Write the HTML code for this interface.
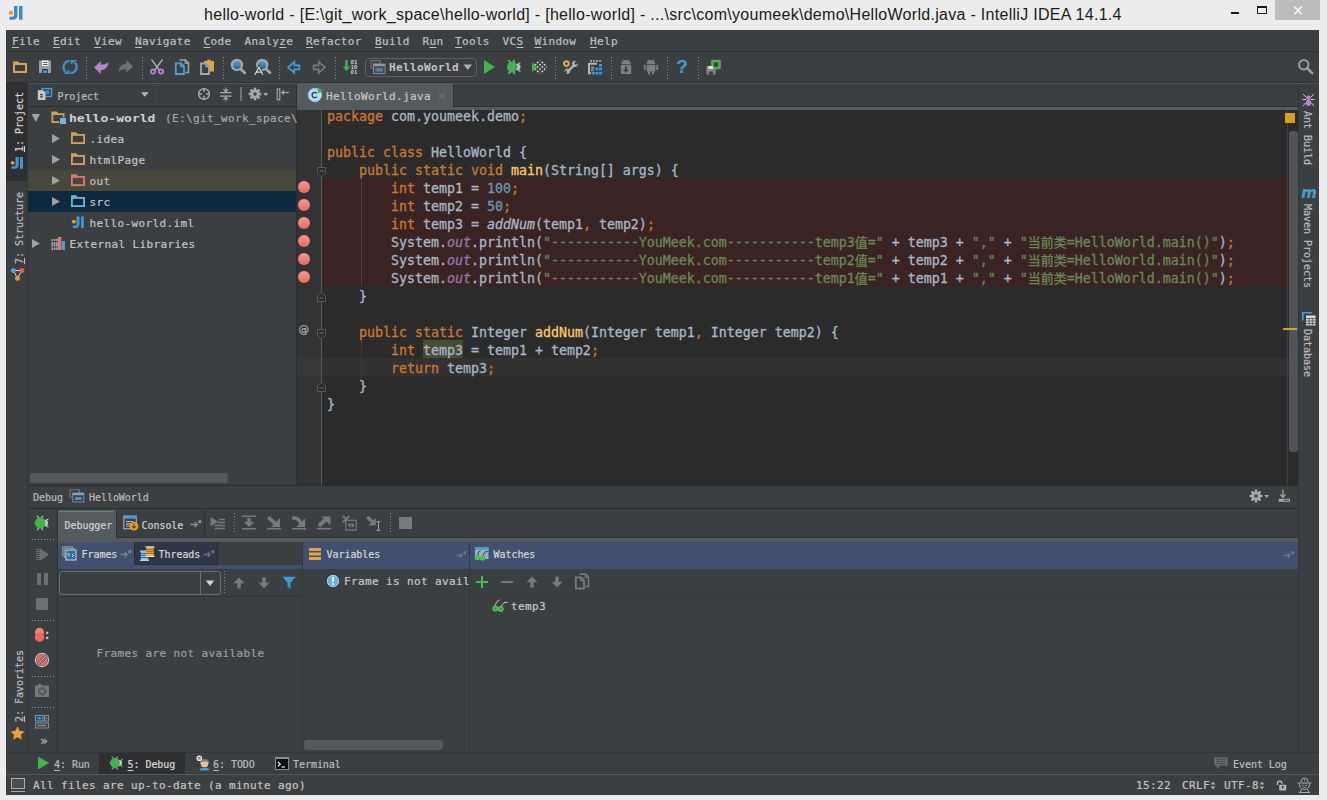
<!DOCTYPE html>
<html lang="en">
<head>
<meta charset="utf-8">
<title>hello-world - IntelliJ IDEA 14.1.4</title>
<style>
*{box-sizing:border-box;margin:0;padding:0}
html,body{width:1327px;height:800px;overflow:hidden}
body{position:relative;background:#ececec;font-family:"DejaVu Sans Mono","Liberation Mono",monospace;font-size:11px;letter-spacing:0.38px;color:#bbbbbb;-webkit-font-smoothing:antialiased;-webkit-text-stroke:0.200px}
.abs{position:absolute}
#title{position:absolute;left:0;top:0;width:1327px;height:30px;background:#ececec}
#title .txt{position:absolute;left:204px;top:4.500px;line-height:20px;font-family:"Liberation Sans",sans-serif;font-size:16px;letter-spacing:0.290px;color:#1a1a1a;white-space:pre;-webkit-text-stroke:0}
#ide{position:absolute;left:6px;top:30px;width:1313px;height:765px;background:#3c3f41;overflow:hidden}
/* everything inside #ide is positioned in page coords via this wrapper */
#pg{position:absolute;left:-6px;top:-30px;width:1327px;height:800px}
#menu{position:absolute;left:6px;top:30px;width:1313px;height:22px;background:#3c3f41;border-bottom:1px solid #2f3133}
.mn{position:absolute;top:35px;line-height:14px;white-space:pre;color:#c0c0c0;letter-spacing:0.34px}
.mn u{text-decoration:underline;text-underline-offset:1.5px;text-decoration-thickness:1px}
#toolbar{position:absolute;left:6px;top:53px;width:1313px;height:30px;background:#3c3f41;border-bottom:1px solid #323232}
.ic{position:absolute;display:block;overflow:visible}
.vt{position:absolute;width:22px;font-size:10px;letter-spacing:-0.02px;color:#bbbbbb}
.vt span{position:absolute;left:13.500px;top:50%;white-space:pre;line-height:12px;transform:translate(-50%,-50%) rotate(-90deg);display:block}
.vt u{text-decoration:underline;text-underline-offset:0.5px}
.tr{position:absolute;line-height:21px;height:21px;padding-top:1px;white-space:pre;color:#c4c4c4;overflow:hidden;max-width:226px}
.tr b{display:inline-block;font-weight:bold;letter-spacing:0;color:#d0d0d0;-webkit-text-stroke:0;transform:scaleX(1.187);transform-origin:0 50%}
.bp{position:absolute;left:298px;width:12px;height:12px;border-radius:6px;background:linear-gradient(#f79a8e,#e8685c)}
#code{position:absolute;left:0;top:0}
.ln{position:absolute;left:327px;height:18px;line-height:18px;padding-top:2px;white-space:pre;font-family:"DejaVu Sans Mono","Liberation Mono","Noto Sans CJK SC",monospace;font-size:13.290px;letter-spacing:0;color:#a9b7c6;-webkit-text-stroke:0.300px}
.ln .k{color:#cc7832}.ln .n{color:#6897bb}.ln .s{color:#6a8759}.ln .m{color:#ffc66d}
.ln i{font-style:italic}.ln i.f{color:#9876aa}
.ln .c{display:inline-block;width:13px;font-family:"Noto Sans CJK SC","WenQuanYi Zen Hei",sans-serif;font-size:13px;line-height:16px;vertical-align:top;text-align:center}
.vr{position:absolute;width:21px;font-size:10px;letter-spacing:-0.02px;color:#bbbbbb}
.vr span{position:absolute;left:9px;top:50%;white-space:pre;line-height:12px;transform:translate(-50%,-50%) rotate(90deg);display:block}
.t10{position:absolute;font-size:10px;line-height:14px;letter-spacing:-0.050px;white-space:pre;color:#bbbbbb}
.t10 u{text-decoration:underline;text-underline-offset:1.500px}
.hdot{position:absolute;height:1px;background:repeating-linear-gradient(90deg,#9a9c9e 0,#9a9c9e 1px,transparent 1px,transparent 3px)}
.vsep{position:absolute;width:1px;background:repeating-linear-gradient(180deg,#85888a 0,#85888a 1px,transparent 1px,transparent 3px)}
</style>
</head>
<body>
<div id="title">
  <svg class="ic" style="left:8px;top:5px" width="16" height="16" viewBox="0 0 16 16"><path d="M6 1h3.500v9c0 3.300-2 4.700-5 4.700H1.500v-3h2.800c1.200 0 1.700-.6 1.700-1.900z" fill="#3f87c9"/><rect x="11" y="1" width="3.500" height="13.700" fill="#3f87c9"/><circle cx="3" cy="7.800" r="2.200" fill="#f39c1f"/></svg>
  <div class="abs" style="left:1231px;top:12px;width:8px;height:2px;background:#1a1a1a"></div>
  <div class="abs" style="left:1257px;top:6px;width:10px;height:8px;border:1px solid #1a1a1a;border-top-width:2px"></div>
  <div class="abs" style="left:1275px;top:0;width:45px;height:20px;background:#bcbcbc"></div>
  <svg class="ic" style="left:1293px;top:6px" width="10" height="10" viewBox="0 0 10 10"><path d="M1.300 0.800l7.400 7.400M8.700 0.800L1.300 8.200" stroke="#ffffff" stroke-width="1.400"/></svg>
  <div class="txt">hello-world - [E:\git_work_space\hello-world] - [hello-world] - ...\src\com\youmeek\demo\HelloWorld.java - IntelliJ IDEA 14.1.4</div>
</div>
<div id="ide"><div id="pg">
<div id="menu"></div>
<div class="mn" style="left:12px"><u>F</u>ile</div>
<div class="mn" style="left:53px"><u>E</u>dit</div>
<div class="mn" style="left:94px"><u>V</u>iew</div>
<div class="mn" style="left:135px"><u>N</u>avigate</div>
<div class="mn" style="left:203.5px"><u>C</u>ode</div>
<div class="mn" style="left:244.5px">Analy<u>z</u>e</div>
<div class="mn" style="left:306px"><u>R</u>efactor</div>
<div class="mn" style="left:375px"><u>B</u>uild</div>
<div class="mn" style="left:422.5px">R<u>u</u>n</div>
<div class="mn" style="left:455px"><u>T</u>ools</div>
<div class="mn" style="left:502.5px">VC<u>S</u></div>
<div class="mn" style="left:534.5px"><u>W</u>indow</div>
<div class="mn" style="left:590px"><u>H</u>elp</div>

<div id="toolbar"></div>
<div class="vsep" style="left:86px;top:57px;height:23px"></div>
<div class="vsep" style="left:142px;top:57px;height:23px"></div>
<div class="vsep" style="left:223px;top:57px;height:23px"></div>
<div class="vsep" style="left:279px;top:57px;height:23px"></div>
<div class="vsep" style="left:335px;top:57px;height:23px"></div>
<div class="vsep" style="left:555px;top:57px;height:23px"></div>
<div class="vsep" style="left:611px;top:57px;height:23px"></div>
<div class="vsep" style="left:667px;top:57px;height:23px"></div>
<div class="vsep" style="left:698px;top:57px;height:23px"></div>
<!-- open folder -->
<svg class="ic" style="left:12px;top:59px" width="16" height="16" viewBox="0 0 16 16"><path d="M1 2.5h5.2l1.3 1.6H15V14H1z" fill="#d9a54e"/><rect x="3" y="6" width="10" height="6" fill="#3c3f41"/></svg>
<!-- save -->
<svg class="ic" style="left:37px;top:59px" width="16" height="16" viewBox="0 0 16 16"><path d="M2 1.5h12V14H2z" fill="#9a9da0"/><rect x="5" y="1.5" width="6.5" height="5.5" fill="#f2f2f2"/><rect x="6" y="3" width="4.5" height="1" fill="#55585a"/><rect x="6" y="5" width="4.5" height="1" fill="#55585a"/><rect x="5" y="10" width="6" height="4" fill="#3c3f41"/><rect x="6" y="11.5" width="4" height="2.5" fill="#3f97d3"/></svg>
<!-- sync -->
<svg class="ic" style="left:62px;top:59px" width="16" height="16" viewBox="0 0 16 16"><g fill="none" stroke="#3a93c9" stroke-width="2.300"><path d="M7.600 2.200A5.700 5.900 0 0 0 3.600 12.600"/><path d="M8.600 13.900A5.700 5.900 0 0 0 12.600 3.500"/></g><path d="M1 15.100h6.600v-4.600z" fill="#3a93c9"/><path d="M15.200 0.900H8.600v4.600z" fill="#3a93c9"/></svg>
<!-- undo -->
<svg class="ic" style="left:93px;top:59px" width="16" height="16" viewBox="0 0 16 16"><path d="M1 8.400L7.900 2v3.500c3.100 0 6.100-.5 7.300-2.600.4 4.600-2.700 8.100-7.300 8.300v3.700z" fill="#b583cf"/></svg>
<!-- redo -->
<svg class="ic" style="left:118px;top:59px" width="16" height="16" viewBox="0 0 16 16"><path d="M1 8.400L7.900 2v3.500c3.100 0 6.100-.5 7.300-2.600.4 4.600-2.700 8.100-7.300 8.300v3.700z" transform="rotate(180 8.050 7.930)" fill="#6f7274"/></svg>
<!-- cut -->
<svg class="ic" style="left:149px;top:59px" width="16" height="16" viewBox="0 0 16 16"><g stroke="#aab0b3" stroke-width="1.3" fill="none"><path d="M2.500 0.500L10.200 11"/><path d="M13.500 0.500L5.800 11"/></g><g stroke="#b583cf" stroke-width="1.800" fill="none"><circle cx="4" cy="12.600" r="2.100"/><circle cx="12" cy="12.600" r="2.100"/></g></svg>
<!-- copy -->
<svg class="ic" style="left:174px;top:59px" width="16" height="16" viewBox="0 0 16 16"><path d="M5.500 1h6l3 3v9.500h-3" fill="none" stroke="#9ea1a3" stroke-width="1.600"/><path d="M11.200 1v3.300h3.300" fill="none" stroke="#9ea1a3" stroke-width="1.200"/><path d="M1.800 4.300h5.400l2.800 2.800V15H1.800z" fill="#3c3f41" stroke="#4b9fd6" stroke-width="1.800"/><path d="M6.800 4.300v3.200h3.200" fill="none" stroke="#4b9fd6" stroke-width="1.300"/></svg>
<!-- paste -->
<svg class="ic" style="left:199px;top:59px" width="16" height="16" viewBox="0 0 16 16"><path d="M5 2h3l.5-1.200h3L12 2h3v10.500H5z" fill="#e0a346"/><path d="M2 4.500h5.300L10 7.200V15H2z" fill="#3c3f41" stroke="#a4a7a9" stroke-width="1.800"/><path d="M6.800 4.500v3.200H10" fill="none" stroke="#a4a7a9" stroke-width="1.300"/></svg>
<!-- find -->
<svg class="ic" style="left:230px;top:59px" width="16" height="16" viewBox="0 0 16 16"><defs><linearGradient id="lens" x1="0" y1="0" x2="0" y2="1"><stop offset="0" stop-color="#56a8dc"/><stop offset="0.550" stop-color="#3a84b8"/><stop offset="1" stop-color="#2d4d66"/></linearGradient></defs><path d="M10.500 9.800L14.800 13.900" stroke="#a7aaac" stroke-width="2.700" stroke-linecap="round"/><circle cx="6.900" cy="5.900" r="5.100" fill="url(#lens)" stroke="#a7aaac" stroke-width="2.200"/></svg>
<!-- replace -->
<svg class="ic" style="left:254px;top:59px" width="17" height="16" viewBox="0 0 17 16"><path d="M11.800 9.800L16 13.700" stroke="#a7aaac" stroke-width="2.700" stroke-linecap="round"/><circle cx="8.200" cy="5.900" r="5.100" fill="url(#lens)" stroke="#a7aaac" stroke-width="2.200"/><path d="M0.900 15.700L4.900 8.200 8.900 15.700M2.300 13.200h5.200" fill="none" stroke="#3c3f41" stroke-width="3"/><path d="M0.900 15.700L4.900 8.200 8.900 15.700M2.300 13.200h5.200" fill="none" stroke="#d4d6d7" stroke-width="1.300"/></svg>
<!-- back -->
<svg class="ic" style="left:286px;top:59px" width="16" height="16" viewBox="0 0 16 16"><path d="M2 8.300L8.300 2.900v3.500h5v3.900h-5v3.500z" fill="#3c3f41" stroke="#3f9fe0" stroke-width="1.700" stroke-linejoin="miter"/></svg>
<!-- forward -->
<svg class="ic" style="left:311px;top:59px" width="16" height="16" viewBox="0 0 16 16"><path d="M14 8.300L7.700 2.900v3.500h-5v3.900h5v3.500z" fill="#3c3f41" stroke="#77797b" stroke-width="1.700"/></svg>
<!-- make -->
<svg class="ic" style="left:341px;top:59px" width="17" height="16" viewBox="0 0 17 16"><path d="M4.300 1h2.400v6.500h2.500L5.500 12.200 1.800 7.500h2.500z" fill="#3fb54a"/><g font-family="DejaVu Sans Mono,monospace" font-size="5.600" fill="#f0f0f0" letter-spacing="0" style="-webkit-text-stroke:0"><text x="9.600" y="5.400">01</text><text x="9.600" y="10.400">10</text><text x="9.600" y="15.400">01</text></g></svg>
<!-- run config combo -->
<div class="abs" style="left:365px;top:58px;width:112px;height:19px;border:1px solid #5e6163;border-radius:4px;background:#3c3f41"></div>
<svg class="ic" style="left:370px;top:59px" width="16" height="16" viewBox="0 0 16 16"><rect x="1" y="1.500" width="9.500" height="8" fill="#46494b" stroke="#6d7072" stroke-width="1"/><rect x="3.500" y="5" width="11.500" height="9.500" fill="#3c4a57" stroke="#7d8a96" stroke-width="1"/><rect x="3.500" y="5" width="11.500" height="2.200" fill="#8d99a4"/><rect x="5.500" y="9" width="7.500" height="3.500" fill="#5a7f9c"/></svg>
<div class="abs" style="left:389px;top:61px;line-height:14px;font-weight:bold;color:#c4c4c4;letter-spacing:0.380px;-webkit-text-stroke:0">HelloWorld</div>
<svg class="ic" style="left:463px;top:64px" width="10" height="7" viewBox="0 0 10 7"><path d="M0.500 0.500h8.500L4.750 6z" fill="#aeb0b2"/></svg>
<!-- run -->
<svg class="ic" style="left:481px;top:59px" width="16" height="16" viewBox="0 0 16 16"><path d="M3 1l11 7-11 7z" fill="#3fb54a"/></svg>
<!-- debug -->
<svg class="ic" style="left:506px;top:59px" width="16" height="16" viewBox="0 0 16 16"><g stroke="#c0c3c5" stroke-width="1.100" fill="none"><path d="M2.500 1l2.300 3M8.500 1L7 4M2.500 15l2.300-3M8.500 15L7 12"/><path d="M14.500 3.800c-1.700.2-2.500 1.500-2.500 1.500M14.500 12.200c-1.700-.2-2.500-1.500-2.500-1.500"/></g><ellipse cx="11.300" cy="8" rx="3.200" ry="3.300" fill="#b9bcbe"/><ellipse cx="6" cy="8" rx="5" ry="5.600" fill="#3fb54a"/><path d="M9.500 5.500c2 .8 2 4.200 0 5z" fill="#3c3f41" opacity=".55"/></svg>
<!-- coverage -->
<svg class="ic" style="left:531px;top:59px" width="16" height="16" viewBox="0 0 16 16"><defs><pattern id="chk" width="3.200" height="3.200" patternUnits="userSpaceOnUse" patternTransform="rotate(45)"><rect width="3.200" height="3.200" fill="#3c3f41"/><rect width="1.700" height="1.700" fill="#d4d6d7"/></pattern></defs><circle cx="9.300" cy="8" r="6.500" fill="#2f3133"/><circle cx="9.300" cy="8" r="6.500" fill="url(#chk)"/><path d="M1 3.300l5.800 4.700L1 12.700z" fill="#3fb54a"/></svg>
<!-- settings -->
<svg class="ic" style="left:563px;top:59px" width="16" height="16" viewBox="0 0 16 16"><path d="M4 13.500L12 5.200" stroke="#aeb1b3" stroke-width="2.500"/><path d="M8.800 4.200a3.300 3.300 0 0 1 4.300-2.200l-1.900 2 .4 1.500 1.500.4 1.900-2a3.300 3.300 0 0 1-4.500 3.800z" fill="#aeb1b3"/><path d="M7.200 12a3 3 0 0 1-4 2.800l1.700-1.800-.4-1.400-1.400-.4-1.700 1.800a3 3 0 0 1 4-3.300z" fill="#aeb1b3"/><circle cx="3.400" cy="4.600" r="2.400" fill="none" stroke="#e0a346" stroke-width="2.100"/></svg>
<!-- project structure -->
<svg class="ic" style="left:587px;top:59px" width="16" height="16" viewBox="0 0 16 16"><path d="M3 2h11" stroke="#8f9ba6" stroke-width="2" stroke-dasharray="2 1"/><path d="M2 4.800h8M2 4v10.200h2" fill="none" stroke="#b4b7b9" stroke-width="2"/><path d="M4 8.200h3.200M4 9.900h3.200M4 11.600h2.500" stroke="#b4b7b9" stroke-width="0.900"/><g fill="#2f9fe3"><rect x="12.100" y="5" width="2.900" height="2.600"/><rect x="8.500" y="8.700" width="2.900" height="2.600"/><rect x="12.100" y="8.700" width="2.900" height="2.600"/><rect x="4.900" y="12.900" width="2.900" height="2.600"/><rect x="8.500" y="12.900" width="2.900" height="2.600"/><rect x="12.100" y="12.900" width="2.900" height="2.600"/></g></svg>
<!-- sdk manager -->
<svg class="ic" style="left:618px;top:59px" width="16" height="16" viewBox="0 0 16 16"><g fill="#7d7f81"><path d="M3.200 5.200a4.800 4.200 0 0 1 9.600 0z"/><rect x="2.800" y="6" width="10.400" height="9" rx="0.500"/></g><path d="M4.500 0.500l1.200 1.800M11.500 0.500l-1.200 1.800" stroke="#7d7f81" stroke-width="0.900"/><path d="M7 7.500h2v3h2L8 13.800 5 10.500h2z" fill="#3c3f41"/></svg>
<!-- avd -->
<svg class="ic" style="left:643px;top:59px" width="16" height="16" viewBox="0 0 16 16"><g fill="#7d7f81"><path d="M3.700 5a4.300 4 0 0 1 8.600 0z"/><rect x="3.700" y="5.800" width="8.600" height="6.700" rx="0.600"/><rect x="0.800" y="5.800" width="2" height="5.200" rx="1"/><rect x="13.200" y="5.800" width="2" height="5.200" rx="1"/><rect x="5" y="12" width="2" height="3.500" rx="1"/><rect x="9" y="12" width="2" height="3.500" rx="1"/></g><path d="M4.800 0.500l1.200 1.800M11.200 0.500l-1.200 1.800" stroke="#7d7f81" stroke-width="0.900"/></svg>
<!-- help -->
<div class="abs" style="left:675px;top:56px;width:14px;text-align:center;font-family:'Liberation Sans',sans-serif;font-weight:bold;font-size:19px;line-height:22px;color:#4598cf;letter-spacing:0">?</div>
<!-- jrebel-like -->
<svg class="ic" style="left:705px;top:59px" width="17" height="17" viewBox="0 0 17 17"><path d="M1.500 7h9v8.500h-9z" fill="#84878a"/><rect x="3.500" y="7" width="4.800" height="3" fill="#e3e3e3"/><rect x="4" y="12.500" width="4" height="3" fill="#3c3f41"/><rect x="6.200" y="1" width="9.500" height="9" rx="1" fill="#4cae4f" stroke="#4cae4f" stroke-width="1" stroke-dasharray="1 1"/><rect x="8.800" y="3.500" width="4.200" height="4.200" fill="#3c3f41"/><rect x="3.500" y="7.200" width="4.600" height="2.800" fill="#e3e3e3"/></svg>
<!-- search everywhere -->
<svg class="ic" style="left:1297px;top:58px" width="17" height="17" viewBox="0 0 17 17"><path d="M10 10l5.200 5.200" stroke="#9c9ea0" stroke-width="2.600" stroke-linecap="round"/><circle cx="6.800" cy="6.800" r="4.700" fill="none" stroke="#9c9ea0" stroke-width="2"/></svg>

<!-- left tool stripe -->
<div class="abs" style="left:6px;top:83px;width:22px;height:669px;background:#3c3f41;border-right:1px solid #323537"></div>
<div class="abs" style="left:6px;top:83px;width:21px;height:98px;background:#2d2f30"></div>
<div class="vt" style="left:6px;top:92px;height:60px;color:#d4d4d4"><span><u>1</u>: Project</span></div>
<svg class="ic" style="left:10px;top:156px" width="14" height="14" viewBox="0 0 14 14"><path d="M5.500 1h3.200v7.800c0 2.800-1.700 4-4.300 4H1.500v-2.600h2.600c1 0 1.400-.5 1.400-1.600z" fill="#3f97d3"/><rect x="10" y="1" width="3" height="11.800" fill="#3f97d3"/><circle cx="2.600" cy="6.800" r="1.900" fill="#f39c1f"/></svg>
<div class="vt" style="left:6px;top:192px;height:72px"><span><u>7</u>: Structure</span></div>
<svg class="ic" style="left:10px;top:267px" width="15" height="15" viewBox="0 0 15 15"><path d="M3.300 3.500h8.400L7.500 11.300z" fill="none" stroke="#d8d8d8" stroke-width="1"/><circle cx="3.300" cy="3.500" r="2.500" fill="#4a9fd8"/><circle cx="11.700" cy="3.500" r="2.500" fill="#e8604f"/><circle cx="7.500" cy="11.300" r="2.500" fill="#d99a3f"/></svg>
<div class="vt" style="left:6px;top:650px;height:72px"><span><u>2</u>: Favorites</span></div>
<svg class="ic" style="left:10px;top:726px" width="15" height="14" viewBox="0 0 15 14"><path d="M7.500 0.300l2.100 4.500 4.900.6-3.600 3.400.9 4.900-4.300-2.400-4.300 2.400.9-4.900L.5 5.400l4.900-.6z" fill="#eaa03a"/></svg>

<!-- project tool window -->
<div class="abs" style="left:28px;top:83px;width:1292px;height:1px;background:#515456"></div>
<div class="abs" style="left:28px;top:84px;width:268px;height:22px;background:#3c3f41"></div>
<div class="abs" style="left:28px;top:106px;width:268px;height:1px;background:#2b2d2e"></div>
<div class="abs" style="left:296px;top:84px;width:1px;height:402px;background:#2b2d2e"></div>
<!-- header icon -->
<svg class="ic" style="left:37px;top:87px" width="16" height="14" viewBox="0 0 16 14"><rect x="5" y="1.500" width="9.500" height="8" fill="#2f4b66" stroke="#4aa0d8" stroke-width="1.200"/><rect x="8.500" y="3.500" width="3.500" height="3.500" fill="#3f8fd0"/><path d="M0.800 3.300h5.400l2.300 2.300V13H0.800z" fill="#c9cbcc"/><path d="M3 7h3v1.200H3zM3 9.200h3v1.200H3z" fill="#3c3f41"/></svg>
<div class="abs" style="left:57.500px;top:90.500px;font-size:10px;line-height:12px;letter-spacing:-0.100px;color:#bbbbbb">Project</div>
<svg class="ic" style="left:141px;top:92px" width="8" height="5" viewBox="0 0 8 5"><path d="M0 .3h7.600L3.800 4.800z" fill="#b4b6b7"/></svg>
<div class="abs" style="left:155px;top:85px;width:1px;height:21px;background:repeating-linear-gradient(180deg,#4a4d4f 0,#4a4d4f 1px,transparent 1px,transparent 3px)"></div>
<!-- locate -->
<svg class="ic" style="left:197px;top:87px" width="14" height="14" viewBox="0 0 14 14"><circle cx="7" cy="7" r="5.400" fill="none" stroke="#a9acae" stroke-width="1.400"/><path d="M7 1v3.800M7 9.200V13M1 7h3.800M9.200 7H13" stroke="#a9acae" stroke-width="1.600"/></svg>
<!-- collapse -->
<svg class="ic" style="left:219px;top:87px" width="14" height="15" viewBox="0 0 14 15"><path d="M1 5.700h11.500M1 9.200h11.500" stroke="#a9acae" stroke-width="1.200"/><path d="M6.750 0.500v4M6.750 14.200v-4" stroke="#a9acae" stroke-width="1.100"/><path d="M4.500 2.300l2.250 2.400L9 2.300M4.500 12.500l2.250-2.400L9 12.500" fill="none" stroke="#a9acae" stroke-width="1.100"/></svg>
<div class="abs" style="left:240px;top:87px;width:2px;height:14px;background:#6f7477"></div>
<!-- gear -->
<svg class="ic" style="left:248px;top:87px" width="14" height="14" viewBox="0 0 14 14"><g transform="translate(7 7)"><g fill="#a9acae"><rect x="-1.300" y="-6.300" width="2.600" height="12.600"/><rect x="-1.300" y="-6.300" width="2.600" height="12.600" transform="rotate(45)"/><rect x="-1.300" y="-6.300" width="2.600" height="12.600" transform="rotate(90)"/><rect x="-1.300" y="-6.300" width="2.600" height="12.600" transform="rotate(135)"/><circle r="4.300"/></g><circle r="1.800" fill="#3c3f41"/></g></svg>
<svg class="ic" style="left:263px;top:93px" width="6" height="4" viewBox="0 0 6 4"><path d="M0.300 0h4.800L2.700 3z" fill="#a9acae"/></svg>
<!-- hide -->
<svg class="ic" style="left:276px;top:88px" width="14" height="13" viewBox="0 0 14 13"><rect x="1.200" y="1" width="2.600" height="10.800" fill="#3c3f41" stroke="#a9acae" stroke-width="1.100"/><path d="M5.800 4.500h7" stroke="#a9acae" stroke-width="1.200"/><path d="M8 2.300L5.800 4.500 8 6.700" fill="none" stroke="#a9acae" stroke-width="1.200"/></svg>
<!-- tree -->
<div class="abs" style="left:28px;top:170px;width:268px;height:21px;background:#49483c"></div>
<div class="abs" style="left:28px;top:191px;width:268px;height:21px;background:#0d293e"></div>
<!-- arrows -->
<svg class="ic" style="left:31px;top:113px" width="10" height="10" viewBox="0 0 10 10"><path d="M0.600 1h8.400L4.800 9z" fill="#9fa2a4"/></svg>
<svg class="ic" style="left:51px;top:133px" width="10" height="11" viewBox="0 0 10 11"><path d="M1 1l8 4.500-8 4.500z" fill="#9fa2a4"/></svg>
<svg class="ic" style="left:51px;top:154px" width="10" height="11" viewBox="0 0 10 11"><path d="M1 1l8 4.500-8 4.500z" fill="#9fa2a4"/></svg>
<svg class="ic" style="left:51px;top:175px" width="10" height="11" viewBox="0 0 10 11"><path d="M1 1l8 4.500-8 4.500z" fill="#9fa2a4"/></svg>
<svg class="ic" style="left:51px;top:196px" width="10" height="11" viewBox="0 0 10 11"><path d="M1 1l8 4.500-8 4.500z" fill="#9fa2a4"/></svg>
<svg class="ic" style="left:31px;top:238px" width="10" height="11" viewBox="0 0 10 11"><path d="M1 1l8 4.500-8 4.500z" fill="#9fa2a4"/></svg>
<!-- folder icons -->
<svg class="ic" style="left:50px;top:110px" width="18" height="16" viewBox="0 0 18 16"><path d="M1.500 1.500h5.200l1.500 1.800h6.300V13H1.500z" fill="#d6a254"/><rect x="3.300" y="5" width="9.400" height="6.200" fill="#3c3f41"/><rect x="9.300" y="7.300" width="7.200" height="7.200" fill="#3c3f41"/><rect x="10" y="8" width="6" height="6" fill="#76b2dd"/></svg>
<svg class="ic" style="left:70px;top:130px" width="16" height="16" viewBox="0 0 16 16"><path d="M1 2.300h5.200l1.500 1.800H15V14H1z" fill="#d6a254"/><rect x="2.800" y="5.800" width="10.400" height="6.400" fill="#3c3f41"/></svg>
<svg class="ic" style="left:70px;top:151px" width="16" height="16" viewBox="0 0 16 16"><path d="M1 2.300h5.200l1.500 1.800H15V14H1z" fill="#d6a254"/><rect x="2.800" y="5.800" width="10.400" height="6.400" fill="#3c3f41"/></svg>
<svg class="ic" style="left:70px;top:172px" width="16" height="16" viewBox="0 0 16 16"><path d="M1 2.300h5.200l1.500 1.800H15V14H1z" fill="#e6766c"/><rect x="2.800" y="5.800" width="10.400" height="6.400" fill="#49483c"/></svg>
<svg class="ic" style="left:70px;top:193px" width="16" height="16" viewBox="0 0 16 16"><path d="M1 2.300h5.200l1.500 1.800H15V14H1z" fill="#73b4dc"/><rect x="2.800" y="5.800" width="10.400" height="6.400" fill="#0d293e"/></svg>
<svg class="ic" style="left:71px;top:216px" width="14" height="13" viewBox="0 0 14 13"><path d="M5.500 0.500h3v7.500c0 2.800-1.700 4-4.200 4H1.800V9.500h2.400c1 0 1.300-.5 1.300-1.600z" fill="#3f97d3"/><rect x="10" y="0.500" width="2.800" height="11.500" fill="#3f97d3"/><circle cx="2.800" cy="5.600" r="1.900" fill="#f39c1f"/></svg>
<svg class="ic" style="left:51px;top:236px" width="15" height="15" viewBox="0 0 15 15"><g fill="#a6a9ab"><rect x="0.500" y="3" width="1.600" height="11"/><rect x="2.800" y="3" width="1.600" height="11"/><rect x="5.100" y="3" width="1.600" height="11"/></g><rect x="6.800" y="1" width="3.400" height="13" fill="#e8756b"/><rect x="10.600" y="5" width="3.400" height="9" fill="#4aa0d8"/><path d="M0.500 5.500h6.200M0.500 11h6.200" stroke="#3c3f41" stroke-width="1"/></svg>
<!-- labels -->
<div class="tr" style="left:68.500px;top:107px;width:90px"><b>hello-world</b></div>
<div class="tr" style="left:158px;top:107px;color:#a8a8a8"> (E:\git_work_space\</div>
<div class="tr" style="left:89.500px;top:128px">.idea</div>
<div class="tr" style="left:89.500px;top:149px">htmlPage</div>
<div class="tr" style="left:89.500px;top:170px">out</div>
<div class="tr" style="left:89.500px;top:191px">src</div>
<div class="tr" style="left:89.500px;top:212px">hello-world.iml</div>
<div class="tr" style="left:69.500px;top:233px">External Libraries</div>
<!-- h scrollbar -->
<div class="abs" style="left:30px;top:473px;width:198px;height:10px;border-radius:3px;background:#55595b"></div>

<!-- editor tabs -->
<div class="abs" style="left:297px;top:84px;width:1001px;height:23px;background:#3c3f41"></div>
<div class="abs" style="left:297px;top:83px;width:156px;height:24px;background:#555a5e"></div>
<div class="abs" style="left:453px;top:84px;width:1px;height:22px;background:#2f3133"></div>
<div class="abs" style="left:453px;top:106px;width:845px;height:1px;background:#2f3133"></div>
<div class="abs" style="left:297px;top:107px;width:1001px;height:3.500px;background:#555a5e"></div>
<svg class="ic" style="left:307px;top:86px" width="17" height="17" viewBox="0 0 17 17"><circle cx="7.900" cy="9" r="6.700" fill="#b4def7"/><circle cx="7.900" cy="9" r="6.700" fill="none" stroke="#8fc6ea" stroke-width="1"/><path d="M9.800 7.200A2.700 2.700 0 1 0 9.800 10.800" fill="none" stroke="#2b3a47" stroke-width="1.300"/><path d="M10.800 1.200l5 3.200-5 3z" fill="#3fb54a"/></svg>
<div class="abs" style="left:326px;top:90px;line-height:14px;color:#c8c8c8">HelloWorld.java</div>
<svg class="ic" style="left:438px;top:92px" width="8" height="8" viewBox="0 0 8 8"><path d="M1 1l6 6M7 1L1 7" stroke="#6e7173" stroke-width="1.600"/></svg>
<!-- editor body -->
<div class="abs" style="left:297px;top:110px;width:1001px;height:375px;background:#2b2b2b"></div>
<div class="abs" style="left:297px;top:110px;width:25px;height:375px;background:#313335"></div>
<!-- line highlights -->
<div class="abs" style="left:322px;top:178px;width:967px;height:108px;background:#3a2323"></div>
<div class="abs" style="left:297px;top:358px;width:25px;height:18px;background:#353739"></div>
<div class="abs" style="left:322px;top:358px;width:967px;height:18px;background:#323232"></div>
<div class="abs" style="left:423px;top:340px;width:40px;height:18px;background:#474c36"></div>
<div class="abs" style="left:321px;top:110px;width:1px;height:375px;background:#555a5d"></div>
<!-- indent guides -->
<div class="abs" style="left:361px;top:178px;width:1px;height:108px;background:#4f3b3b"></div>
<div class="abs" style="left:361px;top:340px;width:1px;height:36px;background:#3a3b3c"></div>
<!-- breakpoints -->
<div class="bp" style="top:181px"></div><div class="bp" style="top:199px"></div><div class="bp" style="top:217px"></div><div class="bp" style="top:235px"></div><div class="bp" style="top:253px"></div><div class="bp" style="top:271px"></div>
<!-- fold markers -->
<svg class="ic" style="left:317px;top:167px" width="9" height="11" viewBox="0 0 9 11"><path d="M0.500 0.500h8v5.500l-4 4-4-4z" fill="#2b2b2b" stroke="#5a5d60" stroke-width="1"/><path d="M2.500 4h4" stroke="#74777a" stroke-width="1"/></svg>
<svg class="ic" style="left:317px;top:291px" width="9" height="11" viewBox="0 0 9 11"><path d="M0.500 10.500h8V5l-4-4-4 4z" fill="#2b2b2b" stroke="#5a5d60" stroke-width="1"/><path d="M2.500 7h4" stroke="#74777a" stroke-width="1"/></svg>
<svg class="ic" style="left:317px;top:329px" width="9" height="11" viewBox="0 0 9 11"><path d="M0.500 0.500h8v5.500l-4 4-4-4z" fill="#2b2b2b" stroke="#5a5d60" stroke-width="1"/><path d="M2.500 4h4" stroke="#74777a" stroke-width="1"/></svg>
<svg class="ic" style="left:317px;top:381px" width="9" height="11" viewBox="0 0 9 11"><path d="M0.500 10.500h8V5l-4-4-4 4z" fill="#2b2b2b" stroke="#5a5d60" stroke-width="1"/><path d="M2.500 7h4" stroke="#74777a" stroke-width="1"/></svg>
<div class="abs" style="left:298.500px;top:322px;width:12px;line-height:14px;font-family:'DejaVu Sans','Liberation Sans',sans-serif;font-size:10.500px;color:#b4b4b4;letter-spacing:0">@</div>
<!-- code -->
<div id="code">
<div class="ln" style="top:106px"><span class="k">package </span>com.youmeek.demo<span class="k">;</span></div>
<div class="ln" style="top:142px"><span class="k">public class </span>HelloWorld {</div>
<div class="ln" style="top:160px">    <span class="k">public static void </span><span class="m">main</span>(String[] args) {</div>
<div class="ln" style="top:178px">        <span class="k">int </span>temp1 = <span class="n">100</span><span class="k">;</span></div>
<div class="ln" style="top:196px">        <span class="k">int </span>temp2 = <span class="n">50</span><span class="k">;</span></div>
<div class="ln" style="top:214px">        <span class="k">int </span>temp3 = <i>addNum</i>(temp1<span class="k">, </span>temp2)<span class="k">;</span></div>
<div class="ln" style="top:232px">        System.<i class="f">out</i>.println(<span class="s">"-----------YouMeek.com-----------temp3<span class="c">值</span>="</span> + temp3 + <span class="s">","</span> + <span class="s">"<span class="c">当</span><span class="c">前</span><span class="c">类</span>=HelloWorld.main()"</span>)<span class="k">;</span></div>
<div class="ln" style="top:250px">        System.<i class="f">out</i>.println(<span class="s">"-----------YouMeek.com-----------temp2<span class="c">值</span>="</span> + temp2 + <span class="s">","</span> + <span class="s">"<span class="c">当</span><span class="c">前</span><span class="c">类</span>=HelloWorld.main()"</span>)<span class="k">;</span></div>
<div class="ln" style="top:268px">        System.<i class="f">out</i>.println(<span class="s">"-----------YouMeek.com-----------temp1<span class="c">值</span>="</span> + temp1 + <span class="s">","</span> + <span class="s">"<span class="c">当</span><span class="c">前</span><span class="c">类</span>=HelloWorld.main()"</span>)<span class="k">;</span></div>
<div class="ln" style="top:286px">    }</div>
<div class="ln" style="top:322px">    <span class="k">public static </span>Integer <span class="m">addNum</span>(Integer temp1<span class="k">, </span>Integer temp2) {</div>
<div class="ln" style="top:340px">        <span class="k">int </span>temp3 = temp1 + temp2<span class="k">;</span></div>
<div class="ln" style="top:358px">        <span class="k">return </span>temp3<span class="k">;</span></div>
<div class="ln" style="top:376px">    }</div>
<div class="ln" style="top:394px">}</div>
</div>
<!-- marker stripe / scrollbar -->
<div class="abs" style="left:1289px;top:110px;width:9px;height:375px;background:#2b2b2b"></div>
<div class="abs" style="left:1287px;top:110px;width:1px;height:375px;background:rgba(110,105,70,0.35)"></div>
<div class="abs" style="left:1289px;top:131px;width:9px;height:321px;border-radius:3px;background:#515456"></div>
<div class="abs" style="left:1285px;top:113px;width:10px;height:10px;background:#d9a21a"></div>
<div class="abs" style="left:1283px;top:328px;width:14px;height:2px;background:#d9a21a"></div>

<!-- right tool stripe -->
<div class="abs" style="left:1298px;top:84px;width:21px;height:668px;background:#3c3f41;border-left:1px solid #323537"></div>
<svg class="ic" style="left:1302px;top:93px" width="13" height="14" viewBox="0 0 13 14"><g stroke="#d8d8d8" stroke-width="0.900" fill="none"><path d="M1 1l3.500 3.500M12 1L8.500 4.500M0.500 6.500h3.500M12.500 6.500H9M1 13l3-3.500M12 13L9 9.500"/></g><ellipse cx="6.500" cy="4.800" rx="2.300" ry="2.300" fill="#b583cf"/><ellipse cx="6.500" cy="9.800" rx="2.600" ry="3.200" fill="#b583cf"/></svg>
<div class="vr" style="left:1298px;top:111px;height:54px"><span>Ant Build</span></div>
<div class="abs" style="left:1301px;top:183px;width:16px;text-align:center;font-family:'DejaVu Sans','Liberation Sans',sans-serif;font-style:italic;font-weight:bold;font-size:15px;line-height:20px;letter-spacing:0;color:#4a9cc9">m</div>
<div class="vr" style="left:1298px;top:204px;height:84px"><span>Maven Projects</span></div>
<svg class="ic" style="left:1302px;top:312px" width="14" height="14" viewBox="0 0 14 14"><path d="M0.800 8.500V0.800h9" fill="none" stroke="#4a9fd8" stroke-width="1.600"/><rect x="4" y="3.500" width="9.500" height="10" fill="#d8dadb"/><path d="M4 6.500h9.500M4 9h9.500M4 11.500h9.500M7.200 6.500v7M10.400 6.500v7" stroke="#55585a" stroke-width="0.900"/></svg>
<div class="vr" style="left:1298px;top:329px;height:48px"><span>Database</span></div>

<!-- debug tool window -->
<div class="abs" style="left:28px;top:485px;width:1270px;height:1px;background:#2b2d2e"></div>
<div class="abs" style="left:28px;top:486px;width:1270px;height:22px;background:#3c3f41"></div>
<div class="abs" style="left:28px;top:508px;width:1270px;height:1px;background:#2b2d2e"></div>
<div class="t10" style="left:33px;top:490.500px">Debug</div>
<svg class="ic" style="left:69px;top:489px" width="16" height="14" viewBox="0 0 16 14"><rect x="1" y="0.800" width="9.500" height="7.500" fill="#3c3f41" stroke="#7a7d7f" stroke-width="1"/><rect x="3.800" y="4" width="11" height="9" fill="#34414e" stroke="#5b9ac4" stroke-width="1"/><rect x="3.800" y="4" width="11" height="2.200" fill="#8fa0ad"/><rect x="6" y="8" width="6.500" height="3" fill="#6c8ba3"/></svg>
<div class="t10" style="left:89px;top:490.500px">HelloWorld</div>
<!-- header right icons -->
<svg class="ic" style="left:1249px;top:489px" width="14" height="14" viewBox="0 0 14 14"><g transform="translate(7 7)"><g fill="#a9acae"><rect x="-1.300" y="-6.300" width="2.600" height="12.600"/><rect x="-1.300" y="-6.300" width="2.600" height="12.600" transform="rotate(45)"/><rect x="-1.300" y="-6.300" width="2.600" height="12.600" transform="rotate(90)"/><rect x="-1.300" y="-6.300" width="2.600" height="12.600" transform="rotate(135)"/><circle r="4.300"/></g><circle r="1.800" fill="#3c3f41"/></g></svg>
<svg class="ic" style="left:1264px;top:495px" width="6" height="4" viewBox="0 0 6 4"><path d="M0.300 0h4.800L2.700 3z" fill="#a9acae"/></svg>
<svg class="ic" style="left:1278px;top:489px" width="13" height="14" viewBox="0 0 13 14"><path d="M5 0.500v7.500M2.500 5.500L5 8.300 7.500 5.500" fill="none" stroke="#a9acae" stroke-width="1.200"/><rect x="0.800" y="9.800" width="11.200" height="3" fill="#a9acae"/><rect x="5.500" y="10.800" width="5.500" height="1" fill="#3c3f41"/></svg>
<!-- left toolbar column -->
<div class="abs" style="left:57px;top:509px;width:1px;height:243px;background:#2f3133"></div>
<svg class="ic" style="left:34px;top:515px" width="16" height="16" viewBox="0 0 16 16"><g stroke="#c8cacb" stroke-width="1.100" fill="none"><path d="M3 0.800l2.300 2.800M9 0.800L7.200 3.600M3 15.200l2.300-2.800M9 15.200l-1.800-2.800M0.500 8h2"/><path d="M14.500 4c-1.500.3-2.300 1.300-2.300 1.300M14.500 12c-1.500-.3-2.300-1.300-2.300-1.300"/></g><ellipse cx="11" cy="8" rx="3" ry="3.300" fill="#c3c5c7"/><ellipse cx="6.200" cy="8" rx="5.200" ry="5.600" fill="#3fb54a"/></svg>
<div class="hdot" style="left:32px;top:539px;width:23px"></div>
<svg class="ic" style="left:35px;top:547px" width="15" height="15" viewBox="0 0 15 15"><path d="M4.500 1l9.500 6.500L4.500 14z" fill="#6d7072"/><path d="M1 2.500h3.500M1 4.500h3.500M1 6.500h3.500M1 8.500h3.500M1 10.500h3.500M1 12.500h3.500" stroke="#6d7072" stroke-width="1"/></svg>
<div class="abs" style="left:37px;top:573px;width:4px;height:12px;background:#6d7072"></div>
<div class="abs" style="left:43.500px;top:573px;width:4px;height:12px;background:#6d7072"></div>
<div class="abs" style="left:36px;top:598px;width:12px;height:12px;background:#6d7072"></div>
<div class="hdot" style="left:32px;top:620px;width:23px"></div>
<svg class="ic" style="left:34px;top:627px" width="16" height="16" viewBox="0 0 16 16"><circle cx="5.500" cy="5.200" r="4.500" fill="#f08477"/><circle cx="5.500" cy="10.300" r="4.700" fill="#e8685c"/><rect x="12" y="4.800" width="2.300" height="2.300" fill="#b8babb"/><rect x="12" y="9.800" width="2.300" height="2.300" fill="#b8babb"/></svg>
<svg class="ic" style="left:34px;top:652px" width="16" height="16" viewBox="0 0 16 16"><circle cx="8" cy="8" r="5.800" fill="#e8685c"/><circle cx="8" cy="8" r="6.600" fill="none" stroke="#c9cbcc" stroke-width="1.100"/><path d="M3.300 12.700L12.700 3.300" stroke="#3c3f41" stroke-width="2.600"/><path d="M3.300 12.700L12.700 3.300" stroke="#c9cbcc" stroke-width="1.100"/></svg>
<div class="hdot" style="left:32px;top:676px;width:23px"></div>
<svg class="ic" style="left:34px;top:683px" width="16" height="15" viewBox="0 0 16 15"><path d="M1 2.500h3V1h3.500v1.500H15V14H1z" fill="#77797b"/><circle cx="8.300" cy="8.300" r="4" fill="#3c3f41" opacity=".55"/><circle cx="8.300" cy="8.300" r="3.900" fill="none" stroke="#5d6062" stroke-width="1"/><circle cx="8.300" cy="8.300" r="2" fill="#77797b"/></svg>
<div class="hdot" style="left:32px;top:707px;width:23px"></div>
<svg class="ic" style="left:34px;top:714px" width="16" height="16" viewBox="0 0 16 16"><rect x="1.500" y="1.500" width="7.500" height="5.500" fill="#3c3f41" stroke="#4a9fd8" stroke-width="1.200"/><rect x="3.500" y="3.300" width="3.500" height="2" fill="#4a9fd8"/><rect x="10.500" y="1.500" width="4" height="5.500" fill="none" stroke="#8b8e90" stroke-width="1"/><rect x="11.800" y="3.300" width="1.400" height="2" fill="#8b8e90"/><rect x="1.500" y="9" width="13" height="5" fill="none" stroke="#8b8e90" stroke-width="1"/><rect x="3.500" y="10.800" width="9" height="1.400" fill="#8b8e90"/></svg>
<div class="abs" style="left:40px;top:734px;font-family:'DejaVu Sans','Liberation Sans',sans-serif;font-size:13px;line-height:14px;letter-spacing:0;color:#b0b2b3">&#187;</div>
<!-- Debugger / Console tabs -->
<div class="abs" style="left:205px;top:537px;width:1093px;height:1px;background:#2f3133"></div>
<div class="abs" style="left:58px;top:538px;width:1240px;height:4px;background:#555a5e"></div>
<div class="abs" style="left:58px;top:510px;width:58px;height:28px;background:#555a5e"></div>
<div class="abs" style="left:58px;top:511px;width:55px;height:1px;background:#5f8a72"></div>
<div class="t10" style="left:64.500px;top:518.500px;color:#d2d2d2">Debugger</div>
<div class="abs" style="left:116px;top:510px;width:89px;height:28px;border:1px solid #2f3133;border-top:0;background:#3c3f41"></div>
<svg class="ic" style="left:123px;top:515px" width="16" height="16" viewBox="0 0 16 16"><rect x="0.800" y="1.200" width="12.500" height="12.500" fill="#3c3f41" stroke="#9da0a2" stroke-width="1.300"/><rect x="0.200" y="0.600" width="13.700" height="3" fill="#4a9fd8"/><path d="M3 6.500h7.500M3 8.800h5M3 11h4" stroke="#b7b9bb" stroke-width="1.200"/><circle cx="11" cy="11.300" r="4.300" fill="#f29c1f"/><path d="M11 8.500v4.500M9 11.200l2 2 2-2" fill="none" stroke="#5a3d10" stroke-width="1.100"/></svg>
<div class="t10" style="left:141.500px;top:518.500px;color:#d2d2d2">Console</div>
<svg class="ic pin" style="left:190px;top:520px" width="12" height="8" viewBox="0 0 12 8"><path d="M0.500 4.500h6.500M4.700 2l2.500 2.500-2.500 2.500" fill="none" stroke="#8a8d8f" stroke-width="1.300"/><rect x="8.300" y="0.200" width="3" height="3" fill="#8a8d8f"/></svg>
<!-- debugger toolbar -->
<svg class="ic" style="left:210px;top:516px" width="16" height="14" viewBox="0 0 16 14"><path d="M0.600 1l7.400 4.600L0.600 10.200z" fill="#77797b"/><path d="M9 3.500h6M7.500 6.500H15M4.500 9.500H15M4.500 12.500H15" stroke="#77797b" stroke-width="1.400"/></svg>
<div class="vsep" style="left:234px;top:513px;height:20px"></div>
<svg class="ic" style="left:242px;top:515px" width="14" height="15" viewBox="0 0 14 15"><path d="M0 1.300h14M0 13.700h14" stroke="#77797b" stroke-width="1.600"/><path d="M5.200 3h3.600v4h3.400L7 12 1.800 7h3.400z" fill="#77797b"/></svg>
<svg class="ic" style="left:267px;top:515px" width="14" height="15" viewBox="0 0 14 15"><path d="M0 13.700h14" stroke="#77797b" stroke-width="1.600"/><path d="M1.200 2.200l8 7.200" stroke="#77797b" stroke-width="3.800"/><path d="M13 3.200v8.800H4z" fill="#77797b"/></svg>
<svg class="ic" style="left:292px;top:515px" width="14" height="15" viewBox="0 0 14 15"><path d="M0 13.700h14" stroke="#77797b" stroke-width="1.600"/><path d="M0.300 3.200c4.200-.8 7.200 1.800 9 6" fill="none" stroke="#77797b" stroke-width="3.600"/><path d="M13.200 3.200v8.800H4.200z" fill="#77797b"/></svg>
<svg class="ic" style="left:317px;top:515px" width="14" height="15" viewBox="0 0 14 15"><path d="M0 13.700h14" stroke="#77797b" stroke-width="1.600"/><path d="M1.700 11l8-7.300" stroke="#77797b" stroke-width="3.800"/><path d="M4.500 1.500h9v9z" fill="#77797b"/></svg>
<svg class="ic" style="left:342px;top:515px" width="15" height="16" viewBox="0 0 15 16"><path d="M0.800 1l6.400 6.400M7.200 1L0.800 7.400" stroke="#77797b" stroke-width="1.800"/><rect x="3.800" y="5.300" width="10.400" height="9.700" fill="#3c3f41" stroke="#77797b" stroke-width="1.200"/><path d="M6.300 10.200h5.500M9.800 8.200l2 2-2 2M8.300 8.200l-2 2 2 2" fill="none" stroke="#8a8d8f" stroke-width="1"/></svg>
<svg class="ic" style="left:366px;top:515px" width="16" height="17" viewBox="0 0 16 17"><path d="M1.200 2l5.500 5" stroke="#77797b" stroke-width="3.300"/><path d="M9.800 3v7.200H2.500z" fill="#77797b"/><path d="M12.500 7.500v7M10.500 6.500c1.500 0 2 1 2 1s.5-1 2-1M10.500 15.500c1.500 0 2-1 2-1s.5 1 2 1" fill="none" stroke="#9a9d9f" stroke-width="1.100"/></svg>
<div class="vsep" style="left:390px;top:513px;height:20px"></div>
<div class="abs" style="left:399px;top:517px;width:13px;height:12px;background:#77797b"></div>
<!-- Frames / Threads -->
<div class="abs" style="left:58px;top:542px;width:244px;height:27px;background:#3c3f41"></div>
<div class="abs" style="left:58px;top:565px;width:244px;height:4px;background:#434f6e"></div>
<div class="abs" style="left:58px;top:542px;width:76px;height:24px;background:#434f6e"></div>
<div class="abs" style="left:134px;top:542px;width:84px;height:23px;background:#2f3648;border:1px solid #2a2d30;border-top:0"></div>
<svg class="ic" style="left:62px;top:546px" width="15" height="15" viewBox="0 0 15 15"><rect x="0.800" y="0.800" width="9.500" height="9" fill="#434f6e" stroke="#9da0a2" stroke-width="1"/><rect x="2.300" y="2.300" width="9.500" height="9" fill="#434f6e" stroke="#9da0a2" stroke-width="1"/><rect x="4" y="4" width="10" height="10" fill="#2d6ea6" stroke="#c9cbcc" stroke-width="1.100"/><path d="M7.500 7L6 8.500 7.500 10M10 8l1.500 1.500L10 11" fill="none" stroke="#fff" stroke-width="1"/></svg>
<div class="t10" style="left:81.500px;top:548px;color:#d8d8d8">Frames</div>
<svg class="ic pin" style="left:120px;top:550px" width="12" height="8" viewBox="0 0 12 8"><path d="M0.500 4.500h6.500M4.700 2l2.500 2.500-2.500 2.500" fill="none" stroke="#7d8186" stroke-width="1.300"/><rect x="8.300" y="0.200" width="3" height="3" fill="#7d8186"/></svg>
<svg class="ic" style="left:140px;top:546px" width="15" height="15" viewBox="0 0 15 15"><rect x="0.800" y="5.500" width="7.400" height="9" fill="#8cc4e8"/><path d="M0.800 7.500h7.400M0.800 9.500h7.400M0.800 11.500h7.400" stroke="#2c5f86" stroke-width="0.900"/><rect x="0" y="4.500" width="9" height="1.300" fill="#c9cbcc"/><rect x="0" y="13.700" width="9" height="1.300" fill="#c9cbcc"/><rect x="6.300" y="1.300" width="7.400" height="9" fill="#f0a93a"/><path d="M6.300 3.300h7.400M6.300 5.300h7.400M6.300 7.300h7.400" stroke="#9a5d10" stroke-width="0.900"/><rect x="5.500" y="0.300" width="9" height="1.300" fill="#e3e4e5"/><rect x="5.500" y="9.700" width="9" height="1.300" fill="#e3e4e5"/></svg>
<div class="t10" style="left:158.500px;top:548px;color:#d8d8d8">Threads</div>
<svg class="ic pin" style="left:203px;top:550px" width="12" height="8" viewBox="0 0 12 8"><path d="M0.500 4.500h6.500M4.700 2l2.500 2.500-2.500 2.500" fill="none" stroke="#6d7176" stroke-width="1.300"/><rect x="8.300" y="0.200" width="3" height="3" fill="#6d7176"/></svg>
<!-- frames combo -->
<div class="abs" style="left:59px;top:571px;width:162px;height:24px;border:1px solid #6b6e70;border-radius:3px;background:#3c3f41"></div>
<div class="abs" style="left:200px;top:572px;width:1px;height:22px;background:#6b6e70"></div>
<svg class="ic" style="left:205px;top:580px" width="10" height="7" viewBox="0 0 10 7"><path d="M0.800 0.500h8.400L5 6z" fill="#d4d4d4"/></svg>
<div class="vsep" style="left:224px;top:571px;height:24px"></div>
<svg class="ic" style="left:233px;top:577px" width="12" height="12" viewBox="0 0 12 12"><path d="M6 0.500l5.500 5.700H7.800V11.500H4.200V6.200H0.500z" fill="#77797b"/></svg>
<svg class="ic" style="left:258px;top:577px" width="12" height="12" viewBox="0 0 12 12"><path d="M6 11.500l5.500-5.700H7.800V0.500H4.200v5.300H0.500z" fill="#77797b"/></svg>
<svg class="ic" style="left:282px;top:576px" width="14" height="14" viewBox="0 0 14 14"><path d="M0.300 0.800h13.400L8.500 6.800v6.200L5.500 10.500V6.800z" fill="#3a9bd9"/></svg>
<div class="abs" style="left:58px;top:596px;width:244px;height:1px;background:#313335"></div>
<div class="abs" style="left:96.500px;top:646.500px;line-height:14px;color:#9d9fa0">Frames are not available</div>
<!-- Variables -->
<div class="abs" style="left:302px;top:542px;width:1px;height:210px;background:#35383a"></div>
<div class="abs" style="left:303px;top:542px;width:995px;height:27px;background:#434f6e"></div>
<div class="abs" style="left:309px;top:548px;width:12px;height:3px;background:#e0a346;box-shadow:0 4.500px 0 #e0a346,0 9px 0 #e0a346"></div>
<div class="t10" style="left:326.500px;top:548px;color:#d8d8d8">Variables</div>
<svg class="ic pin" style="left:455px;top:551px" width="12" height="8" viewBox="0 0 12 8"><path d="M0.500 4.500h6.500M4.700 2l2.500 2.500-2.500 2.500" fill="none" stroke="#6d7483" stroke-width="1.300"/><rect x="8.300" y="0.200" width="3" height="3" fill="#6d7483"/></svg>
<svg class="ic" style="left:326px;top:574px" width="14" height="14" viewBox="0 0 14 14"><circle cx="7" cy="7" r="5.900" fill="#62b2e6"/><circle cx="7" cy="7" r="5.600" fill="none" stroke="#a9d8f5" stroke-width="1"/><rect x="6.100" y="2.800" width="1.800" height="5.200" fill="#fff"/><rect x="6.100" y="9.200" width="1.800" height="1.800" fill="#fff"/></svg>
<div class="abs" style="left:344px;top:575px;width:125px;overflow:hidden;white-space:pre;line-height:14px;color:#c8c8c8">Frame is not available</div>
<!-- Watches -->
<div class="abs" style="left:469px;top:542px;width:1px;height:27px;background:#2f3a55"></div><div class="abs" style="left:469px;top:569px;width:1px;height:183px;background:#35383a"></div>
<svg class="ic" style="left:474px;top:547px" width="16" height="14" viewBox="0 0 16 14"><rect x="1" y="0.500" width="13.500" height="11.500" fill="#9fb0bd"/><rect x="1" y="0.500" width="13.500" height="2.600" fill="#4a9fd8"/><path d="M3.500 9c.5-3.500 1.500-5 3-5M9 9.500c.5-3.500 2-5 4.500-5" fill="none" stroke="#2b2b2b" stroke-width="1"/><circle cx="3.300" cy="10.500" r="2.800" fill="#4fc25b"/><circle cx="8.500" cy="11" r="2.800" fill="#4fc25b"/></svg>
<div class="t10" style="left:493.500px;top:548px;color:#d8d8d8">Watches</div>
<svg class="ic pin" style="left:1283px;top:551px" width="12" height="8" viewBox="0 0 12 8"><path d="M0.500 4.500h6.500M4.700 2l2.500 2.500-2.500 2.500" fill="none" stroke="#6d7483" stroke-width="1.300"/><rect x="8.300" y="0.200" width="3" height="3" fill="#6d7483"/></svg>
<svg class="ic" style="left:476px;top:576px" width="12" height="12" viewBox="0 0 12 12"><path d="M6 0v12M0 6h12" stroke="#3fbf4a" stroke-width="2"/></svg>
<div class="abs" style="left:501px;top:581px;width:12px;height:2px;background:#77797b"></div>
<svg class="ic" style="left:526px;top:576px" width="12" height="12" viewBox="0 0 12 12"><path d="M6 0.500l5.500 5.700H7.800V11.500H4.200V6.200H0.500z" fill="#77797b"/></svg>
<svg class="ic" style="left:551px;top:576px" width="12" height="12" viewBox="0 0 12 12"><path d="M6 11.500l5.500-5.700H7.800V0.500H4.200v5.300H0.500z" fill="#77797b"/></svg>
<svg class="ic" style="left:574px;top:573px" width="16" height="17" viewBox="0 0 16 17"><path d="M5.500 1h6l3 3v9.500h-3" fill="none" stroke="#77797b" stroke-width="1.600"/><path d="M11.200 1v3.300h3.300" fill="none" stroke="#77797b" stroke-width="1.200"/><path d="M1.800 4.300h5.400l2.800 2.800V15.500H1.800z" fill="#3c3f41" stroke="#77797b" stroke-width="1.800"/><path d="M6.800 4.300v3.200h3.200" fill="none" stroke="#77797b" stroke-width="1.300"/></svg>
<div class="abs" style="left:470px;top:595px;width:828px;height:1px;background:#36393b"></div>
<svg class="ic" style="left:492px;top:599px" width="17" height="13" viewBox="0 0 17 13"><path d="M3 8.500c.5-4.500 2-7 4.500-7.500M9 9c.5-3 2.500-6.500 6.500-5.500" fill="none" stroke="#d4d6d7" stroke-width="1"/><circle cx="3.300" cy="9.500" r="2.900" fill="#4fc25b"/><circle cx="8.800" cy="10" r="2.900" fill="#4fc25b"/><circle cx="3.300" cy="9.500" r="1.200" fill="#2f8c3a"/><circle cx="8.800" cy="10" r="1.200" fill="#2f8c3a"/></svg>
<div class="abs" style="left:511px;top:600px;line-height:14px;color:#c8c8c8">temp3</div>
<!-- variables h scrollbar -->
<div class="abs" style="left:304px;top:740px;width:139px;height:10px;border-radius:3px;background:#55595b"></div>

<!-- bottom tool stripe -->
<div class="abs" style="left:6px;top:752px;width:1313px;height:1px;background:#323537"></div>
<div class="abs" style="left:6px;top:753px;width:1313px;height:21px;background:#3c3f41"></div>
<div class="abs" style="left:99px;top:753px;width:86px;height:21px;background:#2d2f30"></div>
<svg class="ic" style="left:37px;top:756px" width="13" height="14" viewBox="0 0 13 14"><path d="M1 0.500l11 6.500-11 6.500z" fill="#3fb54a"/></svg>
<div class="t10" style="left:54px;top:758px"><u>4</u>: Run</div>
<svg class="ic" style="left:109px;top:756px" width="15" height="14" viewBox="0 0 15 14"><g stroke="#c8cacb" stroke-width="1" fill="none"><path d="M3 0.500l2 2.500M8.500 0.500L7 3M3 13.500l2-2.500M8.500 13.500L7 11M0.500 7h2"/><path d="M13.500 3.500c-1.500.3-2 1.200-2 1.200M13.500 10.500c-1.500-.3-2-1.200-2-1.200"/></g><ellipse cx="10.500" cy="7" rx="2.600" ry="3" fill="#c3c5c7"/><ellipse cx="6" cy="7" rx="4.800" ry="5.200" fill="#3fb54a"/></svg>
<div class="t10" style="left:127.500px;top:758px;color:#d8d8d8"><u>5</u>: Debug</div>
<svg class="ic" style="left:196px;top:755px" width="15" height="16" viewBox="0 0 15 16"><path d="M4 9a4.500 4.500 0 0 1 9 0z" fill="#9a9da0"/><rect x="5" y="6.500" width="7" height="5.500" rx="2" fill="#f2c28d"/><path d="M4 6.500c0-3 9-3 9 0z" fill="#7d7f81"/><path d="M3.500 15.500c0-4 10-4 10 0z" fill="#3f9fe3"/><circle cx="3.300" cy="3.300" r="2.800" fill="#f2f2f2"/><path d="M1.800 2.600h3M1.800 4h3" stroke="#3c3f41" stroke-width="0.800"/></svg>
<div class="t10" style="left:213px;top:758px"><u>6</u>: TODO</div>
<svg class="ic" style="left:275px;top:757px" width="14" height="13" viewBox="0 0 14 13"><rect x="0.500" y="0.500" width="13" height="12" fill="#0e0e0e" stroke="#8a8d8f" stroke-width="1"/><rect x="0" y="0" width="14" height="2" fill="#8a8d8f"/><path d="M2.800 5l2.500 2.200-2.500 2.200" fill="none" stroke="#fff" stroke-width="1.100"/><path d="M6.500 10h3.500" stroke="#fff" stroke-width="1.100"/></svg>
<div class="t10" style="left:293px;top:758px">Terminal</div>
<svg class="ic" style="left:1214px;top:757px" width="14" height="12" viewBox="0 0 14 12"><path d="M0.500 0.500h13v8H6l-3 3v-3H0.500z" fill="#6f7274"/><path d="M2 2.500h10M2 4.500h10M2 6.500h10M4 1v7M7 1v7M10 1v7" stroke="#3c3f41" stroke-width="0.600"/></svg>
<div class="t10" style="left:1233px;top:758px">Event Log</div>
<!-- status bar -->
<div class="abs" style="left:6px;top:774px;width:1313px;height:1px;background:#555759"></div>
<div class="abs" style="left:6px;top:775px;width:1313px;height:20px;background:#3c3f41"></div>
<div class="abs" style="left:11px;top:778px;width:14px;height:11px;border:1px solid #a9acae;background:#4a4d4f"></div>
<div class="abs" style="left:11px;top:790.500px;width:14px;height:1px;background:#a9acae"></div>
<div class="abs" style="left:33px;top:779px;line-height:14px;color:#c4c4c4">All files are up-to-date (a minute ago)</div>
<div class="abs" style="left:1136px;top:779px;line-height:14px;color:#c4c4c4">15:22</div>
<div class="abs" style="left:1182px;top:779px;line-height:14px;color:#c4c4c4">CRLF</div>
<svg class="ic" style="left:1210px;top:781px" width="6" height="9" viewBox="0 0 6 9"><path d="M0.500 3.500L3 0.500l2.500 3zM0.500 5.500L3 8.500l2.500-3z" fill="#a9acae"/></svg>
<div class="abs" style="left:1224px;top:779px;line-height:14px;color:#c4c4c4">UTF-8</div>
<svg class="ic" style="left:1259px;top:781px" width="6" height="9" viewBox="0 0 6 9"><path d="M0.500 3.500L3 0.500l2.500 3zM0.500 5.500L3 8.500l2.500-3z" fill="#a9acae"/></svg>
<svg class="ic" style="left:1276px;top:780px" width="11" height="11" viewBox="0 0 11 11"><path d="M1.500 5V3.300a2.200 2.200 0 0 1 4.400 0v.5" fill="none" stroke="#c4c6c7" stroke-width="1.200"/><rect x="3.200" y="4.800" width="7" height="5.700" rx="0.800" fill="#b4b6b8"/><path d="M5.500 6.500h2.400M6.700 6.500v2.300" stroke="#3c3f41" stroke-width="1.100"/></svg>
<svg class="ic" style="left:1297px;top:777px" width="15" height="16" viewBox="0 0 15 16"><path d="M4 5a3.500 4 0 0 1 7 0" fill="none" stroke="#a9acae" stroke-width="1"/><path d="M0.500 6h14" stroke="#a9acae" stroke-width="1"/><path d="M2.500 6.500c0 4 2 6 5 6s5-2 5-6" fill="none" stroke="#a9acae" stroke-width="1"/><path d="M5 8.500h1.500M8.500 8.500H10M6 11c.7-.8 2.300-.8 3 0" stroke="#a9acae" stroke-width="1" fill="none"/><path d="M3 15.500l1.500-3M12 15.500l-1.500-3M2 15.500h11" stroke="#a9acae" stroke-width="1" fill="none"/><path d="M7.500 2.500v1.500" stroke="#a9acae" stroke-width="1"/></svg>

</div></div>
</body>
</html>
